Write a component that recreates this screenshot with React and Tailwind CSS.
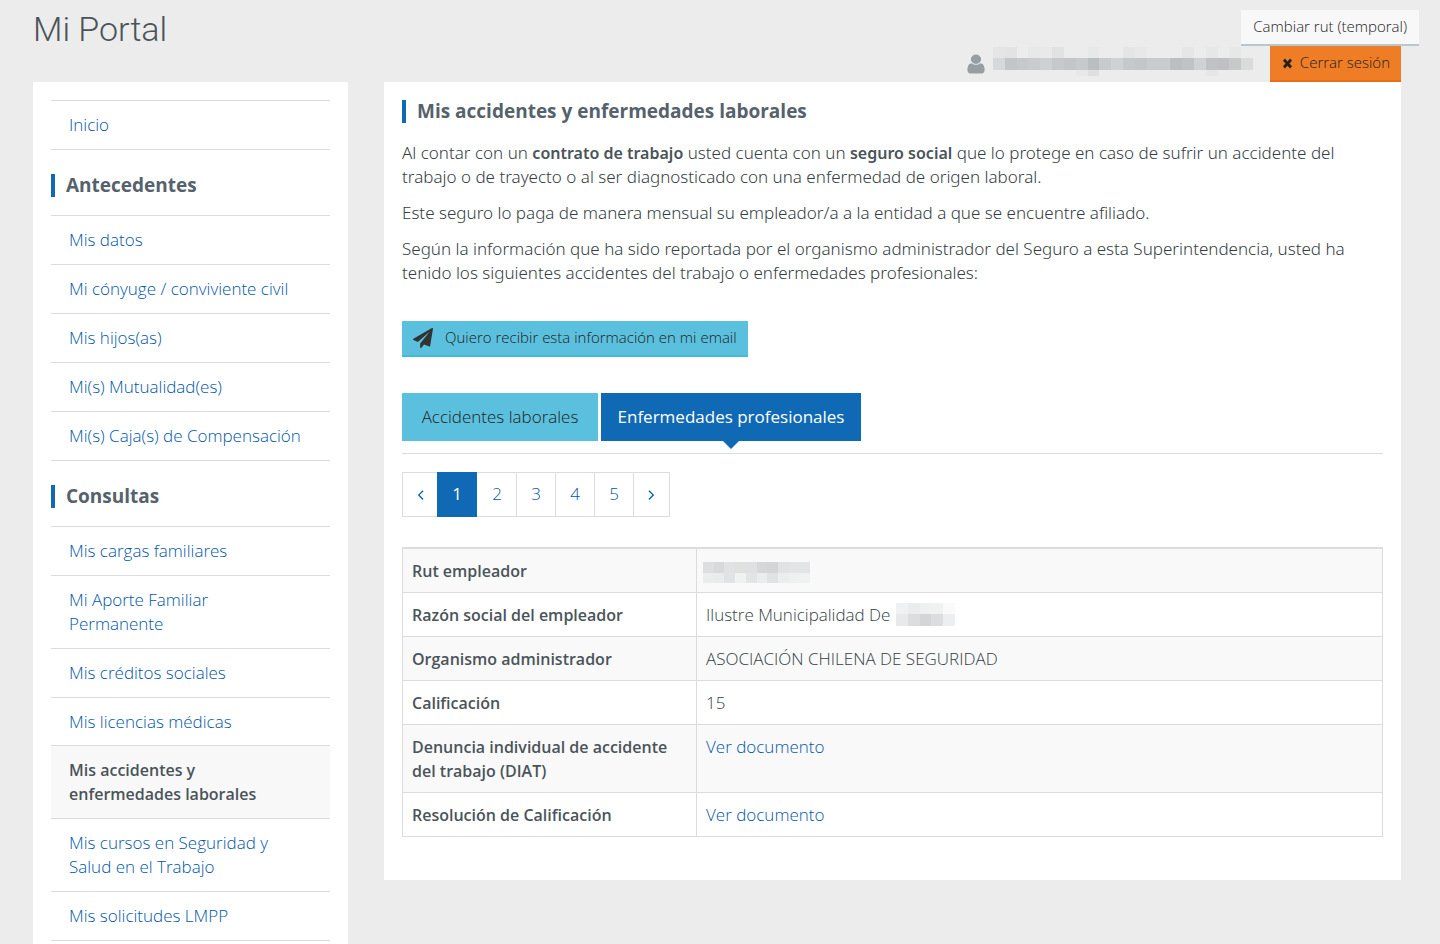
const PATHS = {
  user: "M1536 1399q0 109-62.5 187t-150.5 78h-854q-88 0-150.5-78t-62.5-187q0-85 8.5-160.5t31.5-152 58.5-131 94-89 134.5-34.5q131 128 313 128t313-128q76 0 134.5 34.5t94 89 58.5 131 31.5 152 8.5 160.5zm-256-887q0 159-112.5 271.5t-271.5 112.5-271.5-112.5-112.5-271.5 112.5-271.5 271.5-112.5 271.5 112.5 112.5 271.5z",
  times: "M1490 1322q0 40-28 68l-136 136q-28 28-68 28t-68-28l-294-294-294 294q-28 28-68 28t-68-28l-136-136q-28-28-28-68t28-68l294-294-294-294q-28-28-28-68t28-68l136-136q28-28 68-28t68 28l294 294 294-294q28-28 68-28t68 28l136 136q28 28 28 68t-28 68l-294 294 294 294q28 28 28 68z",
  plane: "M1764 11q33 24 27 64l-256 1536q-5 29-32 45-14 8-31 8-11 0-24-5l-453-185-242 295q-18 23-49 23-13 0-22-4-19-7-30.5-23.5t-11.5-36.5v-349l864-1059-1069 925-395-162q-37-14-40-55-2-37 32-59l1664-960q15-9 32-9 20 0 36 11z",
  left: "M1203 544q0 13-10 23l-393 393 393 393q10 10 10 23t-10 23l-50 50q-10 10-23 10t-23-10l-466-466q-10-10-10-23t10-23l466-466q10-10 23-10t23 10l50 50q10 10 10 23z",
  right: "M1171 960q0 13-10 23l-466 466q-10 10-23 10t-23-10l-50-50q-10-10-10-23t10-23l393-393-393-393q-10-10-10-23t10-23l50-50q10-10 23-10t23 10l466 466q10 10 10 23z",
};

function Icon({ name, className }) {
  return (
    <svg viewBox="0 0 1792 1792" fill="currentColor" aria-hidden="true" preserveAspectRatio="none" className={className}>
      <path d={PATHS[name]} />
    </svg>
  );
}

// Redacted text: each row is [y, height, colours]; "" leaves a cell empty.
function Mosaic({ width, height, cell, rows, className }) {
  return (
    <svg width={width} height={height} aria-hidden="true" shapeRendering="crispEdges" className={className}>
      {rows.map(([y, h, colours]) =>
        colours.map((c, i) => c && (
          <rect key={y + "-" + i} x={Math.round(i * cell)} y={y} width={Math.round((i + 1) * cell) - Math.round(i * cell)} height={h} fill={c} />
        ))
      )}
    </svg>
  );
}

const NAME_ROWS = [
  [0, 11, ["#e5e5e5", "#e3e3e3", "", "#e6e9e8", "#e9e9e9", "#e1e3e3", "", "", "#e6e9e8", "", "", "#e3e6e5", "#e8e8e8", "", "", "", "#e6e6e6", "", "#e5e8e7", "", "#e5e8e7", ""]],
  [11, 12, ["#d7d8d9", "#c2c6c7", "#c7c8ca", "#cacbcd", "#cfd0d2", "#c6c8ca", "#c4c5c7", "#c8c9cb", "#bbbec0", "#c9cacc", "#d0d1d3", "#c5c9ca", "#c4c7c8", "#cacbcd", "#cacbcd", "#bbbfc0", "#bfc3c4", "#d0d1d3", "#c1c2c4", "#c0c0c2", "#c7c8ca", "#dadcdb"]],
  [23, 6, ["", "", "", "", "", "", "", "#e6e9e8", "#dde0df", "", "", "", "", "", "", "", "", "", "#e6e6e6", "", "", ""]],
];
const RUT_ROWS = [
  [0, 11, ["#dddee0", "#d8d9db", "#e1e2e4", "#dfe1e1", "#dfe0e2", "#d6d7d9", "#d4d5d7", "#e1e2e4", "#e3e4e6", "#e3e4e6"]],
  [11, 10, ["#ebeded", "#eaecec", "#e2e3e5", "#f0f2f2", "#e3e5e5", "#ebeced", "#e1e2e4", "#eceded", "#eff0f0", "#f0f1f1"]],
];
const COMPANY_ROWS = [
  [0, 11, ["#f0f1f2", "#ebecee", "#eff1f1", "#f0f1f1", "#fafafa"]],
  [11, 12, ["#e8e9eb", "#dcdddf", "#d4d5d7", "#dcdddf", "#edeef0"]],
];

function Title({ children, className = "" }) {
  return (
    <h2 className={"border-l-4 border-[#0f69b4] pl-[11px] text-[19px] leading-[23px] font-bold text-[#55626c] " + className}>
      {children}
    </h2>
  );
}

function NavList({ items }) {
  return (
    <ul className="border-t border-[#dcdcdc]">
      {items.map(({ label, active }) => (
        <li key={label} className={active ? "relative -mt-0.5 border-y border-[#dcdcdc] bg-[#f8f8f8]" : "border-b border-[#dcdcdc]"}>
          <a
            href="#"
            aria-current={active ? "page" : undefined}
            className={"block py-3 pr-[26px] pl-[18px] " + (active ? "text-[16px] font-semibold text-[#4a5459]" : "text-[#0058a8]")}
          >
            {label}
          </a>
        </li>
      ))}
    </ul>
  );
}

const SECTIONS = [
  ["Antecedentes", [
    { label: "Mis datos" },
    { label: "Mi cónyuge / conviviente civil" },
    { label: "Mis hijos(as)" },
    { label: "Mi(s) Mutualidad(es)" },
    { label: "Mi(s) Caja(s) de Compensación" },
  ]],
  ["Consultas", [
    { label: "Mis cargas familiares" },
    { label: "Mi Aporte Familiar Permanente" },
    { label: "Mis créditos sociales" },
    { label: "Mis licencias médicas" },
    { label: "Mis accidentes y enfermedades laborales", active: true },
    { label: "Mis cursos en Seguridad y Salud en el Trabajo" },
    { label: "Mis solicitudes LMPP" },
  ]],
];

const DETAILS = [
  ["Rut empleador", <Mosaic key="r" width={107} height={21} cell={10.7} rows={RUT_ROWS} className="-ml-[3px] mt-[3px]" />],
  ["Razón social del empleador", (
    <span key="e" className="flex h-6 gap-1.5">
      Ilustre Municipalidad De
      <Mosaic width={59} height={23} cell={11.8} rows={COMPANY_ROWS} />
    </span>
  )],
  ["Organismo administrador", "ASOCIACIÓN CHILENA DE SEGURIDAD"],
  ["Calificación", "15"],
  ["Denuncia individual de accidente del trabajo (DIAT)", <a key="d" href="#" className="text-[#0058a8]">Ver documento</a>],
  ["Resolución de Calificación", <a key="c" href="#" className="text-[#0058a8]">Ver documento</a>],
];

export default function App() {
  return (
    <div className="min-h-screen bg-[#ececec] pr-[39px] pl-[33px] font-['Open_Sans',sans-serif] text-[17px] leading-6 font-light text-[#343e43]">
      <header className="flex items-start justify-between">
        <h1 className="pt-[9px] font-['Roboto',sans-serif] text-[34px] leading-10 font-light text-[#4a5459]">Mi Portal</h1>
        <div className="flex flex-col items-end pt-2.5 text-[15px] text-[#222]">
          <button type="button" className="-mr-[18px] h-9 border-b-2 border-[#b9c7d1] bg-[#f8f8f8] px-3 pb-0.5">
            Cambiar rut (temporal)
          </button>
          <div className="flex h-9 items-start">
            <Icon name="user" className="mt-[7px] mr-[5px] h-[22px] w-6 text-[#979fa2]" />
            <Mosaic width={260} height={29} cell={11.82} rows={NAME_ROWS} className="mt-px mr-[17px]" />
            <button type="button" className="flex h-9 items-center gap-1.5 border-b-2 border-[#e86f16] bg-[#ee7d25] px-[11px] pb-0.5">
              <Icon name="times" className="mt-0.5 h-[14px] w-[13px]" />
              Cerrar sesión
            </button>
          </div>
        </div>
      </header>

      <div className="grid grid-cols-4 items-start gap-9">
        <nav aria-label="Mi Portal" className="bg-white p-[18px]">
          <NavList items={[{ label: "Inicio" }]} />
          {SECTIONS.map(([title, items]) => (
            <section key={title}>
              <Title className="mt-6 mb-[18px]">{title}</Title>
              <NavList items={items} />
            </section>
          ))}
        </nav>

        <main className="col-span-3 bg-white px-[18px] pt-[18px] pb-[43px]">
          <Title>Mis accidentes y enfermedades laborales</Title>
          <div className="mt-[18px] space-y-3 font-['Noto_Sans',sans-serif]">
            <p>
              Al contar con un <strong className="text-[16px] font-semibold text-[#4a5459]">contrato de trabajo</strong> usted
              cuenta con un <strong className="text-[16px] font-semibold text-[#4a5459]">seguro social</strong> que lo protege
              en caso de sufrir un accidente del trabajo o de trayecto o al ser diagnosticado con una enfermedad de origen
              laboral.
            </p>
            <p>Este seguro lo paga de manera mensual su empleador/a a la entidad a que se encuentre afiliado.</p>
            <p>
              Según la información que ha sido reportada por el organismo administrador del Seguro a esta Superintendencia, usted
              ha tenido los siguientes accidentes del trabajo o enfermedades profesionales:
            </p>
          </div>

          <button type="button" className="mt-9 flex h-9 items-center gap-3 border-b-2 border-[#46b8da] bg-[#5bc0de] px-[11px] pb-0.5 text-[15px] text-[#222]">
            <Icon name="plane" className="mt-0.5 h-5 w-5 text-[#333]" />
            Quiero recibir esta información en mi email
          </button>

          <div role="tablist" className="mt-9 flex gap-[3px] border-b border-[#dcdcdc] pb-3">
            <button type="button" role="tab" aria-selected="false" className="h-12 min-w-[196px] bg-[#5bc0de] px-4 text-[#222]">
              Accidentes laborales
            </button>
            <button type="button" role="tab" aria-selected="true" className="relative h-12 min-w-[260px] bg-[#0f69b4] px-4 font-normal text-white">
              Enfermedades profesionales
              <span className="absolute top-full left-1/2 -ml-2 border-x-8 border-t-8 border-x-transparent border-t-[#0f69b4]" />
            </button>
          </div>

          <nav aria-label="Páginas" className="mt-[18px] flex">
            <ul className="flex h-[45px] border border-[#dcdcdc] text-[#0058a8]">
              <li className="flex">
                <a href="#" aria-label="Anterior" className="flex w-[34px] items-center justify-center">
                  <Icon name="left" className="h-[17px] w-[17px]" />
                </a>
              </li>
              {[1, 2, 3, 4, 5].map((n) => (
                <li key={n} className="flex">
                  <a
                    href="#"
                    aria-current={n === 1 ? "page" : undefined}
                    className={
                      n === 1
                        ? "-my-px mr-px flex w-10 items-center justify-center bg-[#0f69b4] pb-0.5 font-normal text-white"
                        : "flex w-[39px] items-center justify-center border-r border-[#dcdcdc] pb-0.5"
                    }
                  >
                    {n}
                  </a>
                </li>
              ))}
              <li className="flex">
                <a href="#" aria-label="Siguiente" className="flex w-[35px] items-center justify-center">
                  <Icon name="right" className="h-[17px] w-[17px]" />
                </a>
              </li>
            </ul>
          </nav>

          <table className="mt-[30px] w-full table-fixed border-collapse border border-t-2 border-[#dcdcdc] text-left">
            <tbody>
              {DETAILS.map(([label, value]) => (
                <tr key={label} className="border-b border-[#dcdcdc] odd:bg-[#f9f9f9]">
                  <th scope="row" className="w-[30%] border-r border-[#dcdcdc] px-[9px] pt-2.5 pb-[9px] align-top text-[16px] font-semibold text-[#4a5459]">{label}</th>
                  <td className="px-[9px] pt-2.5 pb-[9px] align-top">{value}</td>
                </tr>
              ))}
            </tbody>
          </table>
        </main>
      </div>
    </div>
  );
}
